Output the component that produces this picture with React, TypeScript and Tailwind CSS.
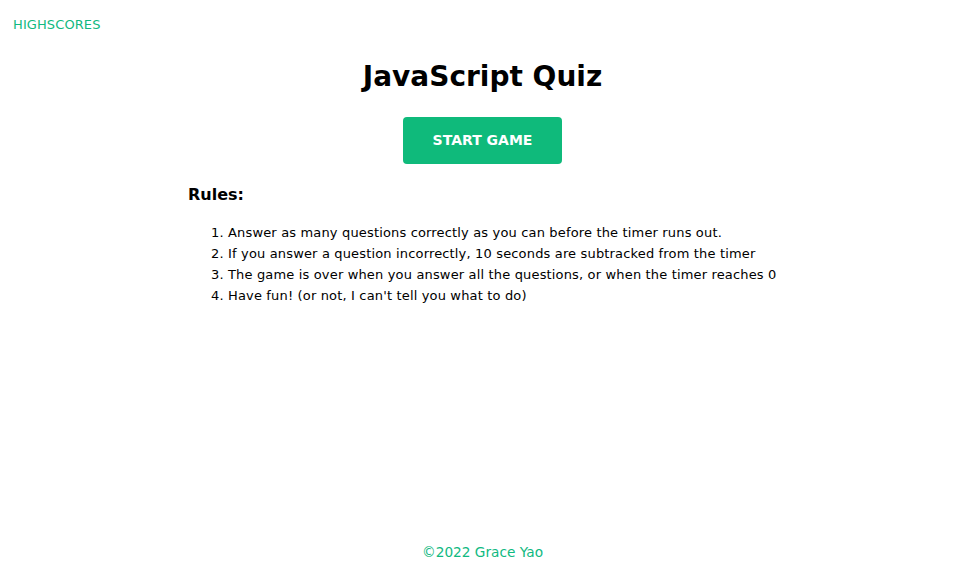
import React from "react";

export default function App() {
  const rules = [
    "Answer as many questions correctly as you can before the timer runs out.",
    "If you answer a question incorrectly, 10 seconds are subtracked from the timer",
    "The game is over when you answer all the questions, or when the timer reaches 0",
    "Have fun! (or not, I can't tell you what to do)",
  ];
  return (
    <div className="min-h-screen flex flex-col bg-white text-black" style={{ fontFamily: '"DejaVu Sans", sans-serif' }}>
      <header className="px-[13px] pt-[12px] h-[40px]">
        <a className="text-[13px] text-[#10b981] leading-[18px] tracking-[0.1px]">HIGHSCORES</a>
      </header>
      <main className="flex flex-col items-center">
        <h1 className="mt-[17px] text-[28px] font-bold leading-[40px]">JavaScript Quiz</h1>
        <button className="mt-[20px] w-[159px] h-[47px] rounded-[4px] bg-[#0fba7b] text-white font-bold text-[14px]">
          START GAME
        </button>
        <section className="w-[589px] mt-[20px]">
          <h2 className="text-[16px] font-bold leading-[22px]">Rules:</h2>
          <ol className="list-decimal pl-10 mt-[16px] text-[13px] tracking-[0.16px] leading-[21px]">
            {rules.map((r) => (
              <li key={r}>{r}</li>
            ))}
          </ol>
        </section>
      </main>
      <footer className="mt-auto pb-[16px] text-center text-[13.7px] text-[#10b981] leading-[18px]">
        ©2022 Grace Yao
      </footer>
    </div>
  );
}
